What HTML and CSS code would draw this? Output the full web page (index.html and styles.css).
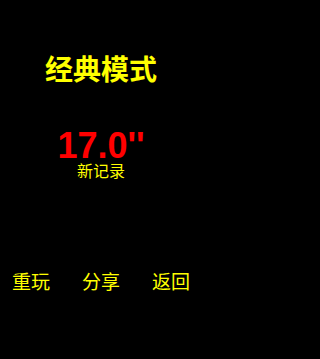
FILE: index.html
```html
<!DOCTYPE html>
<html lang="zh">
<head>
<meta charset="utf-8">
<title>经典模式</title>
<link rel="stylesheet" href="styles.css">
</head>
<body>
<main class="screen">
  <h1 class="title">经典模式</h1>
  <div class="score">17.0''</div>
  <div class="record">新记录</div>
  <nav class="actions">
    <span class="action">重玩</span>
    <span class="action">分享</span>
    <span class="action">返回</span>
  </nav>
</main>
</body>
</html>
```
FILE: styles.css
```css
html, body {
  margin: 0;
  padding: 0;
  background: #000;
}
.screen {
  width: 202px;
  height: 359px;
  display: flex;
  flex-direction: column;
  align-items: center;
  font-family: "Noto Sans CJK SC", "Noto Sans", sans-serif;
  color: #ffff00;
}
.title {
  margin: 54px 0 0;
  font-size: 28px;
  line-height: 28px;
  font-weight: 700;
}
.score {
  margin-top: 48px;
  font-family: "Liberation Sans", Arial, sans-serif;
  font-weight: 700;
  font-size: 36px;
  line-height: 32px;
  color: #ff0000;
}
.record {
  font-size: 16px;
  line-height: 16px;
}
.actions {
  margin-top: 93px;
  align-self: stretch;
  display: flex;
  justify-content: space-between;
  padding: 0 12px;
}
.action {
  font-size: 19px;
  line-height: 19px;
}
```
